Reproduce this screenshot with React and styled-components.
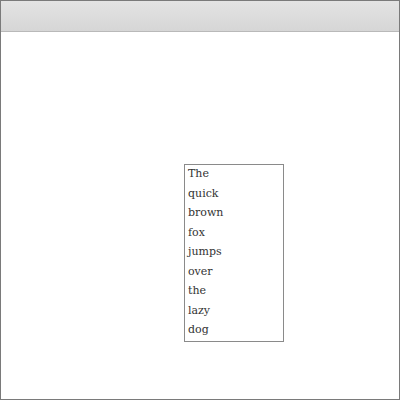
import React from "react";
import styled, { createGlobalStyle } from "styled-components";

const GlobalStyle = createGlobalStyle`
  html, body {
    margin: 0;
    padding: 0;
    background: #fff;
  }
`;

const Window = styled.div`
  box-sizing: border-box;
  width: 400px;
  height: 400px;
  border: 1px solid #7a7a7a;
  display: flex;
  flex-direction: column;
  background: #fff;
`;

const TitleBar = styled.div`
  height: 30px;
  flex-shrink: 0;
  background: linear-gradient(to bottom, #e3e3e3, #d6d6d6);
  border-bottom: 1px solid #b9b9b9;
`;

const Body = styled.div`
  flex: 1;
  padding: 132px 0 0 183px;
`;

const WordBox = styled.ul`
  box-sizing: border-box;
  list-style: none;
  margin: 0;
  padding: 0 3px;
  width: 100px;
  border: 1px solid #8a8a8a;
  font-family: "DejaVu Serif", serif;
  font-size: 11px;
  color: #333;
`;

const Word = styled.li`
  height: 18px;
  line-height: 18px;
  padding-bottom: 1.5px;
`;

const words = ["The", "quick", "brown", "fox", "jumps", "over", "the", "lazy", "dog"];

const App = () => {
  return (
    <>
      <GlobalStyle />
      <Window>
        <TitleBar />
        <Body>
          <WordBox>
            {words.map((w, i) => (
              <Word key={i}>{w}</Word>
            ))}
          </WordBox>
        </Body>
      </Window>
    </>
  );
};

export default App;
